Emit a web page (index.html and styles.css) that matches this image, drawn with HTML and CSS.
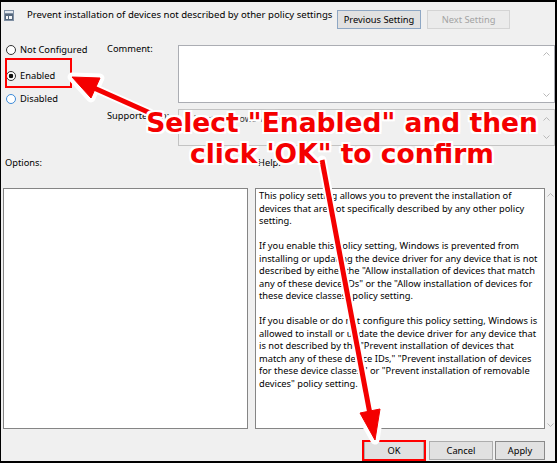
FILE: index.html
```html
<!DOCTYPE html>
<html>
<head>
<meta charset="utf-8">
<link rel="stylesheet" href="styles.css">
</head>
<body>
<div class="window">
  <div class="header">
    <svg class="title-icon" viewBox="0 0 10 11" width="10" height="11">
      <rect x="0" y="0" width="10" height="11" fill="#7f8fa3"/>
      <rect x="1" y="1" width="8" height="2" fill="#e4e9ef"/>
      <rect x="1" y="4" width="8" height="6" fill="#56677c"/>
      <rect x="2" y="6" width="2" height="3" fill="#f4f6f8"/>
      <rect x="5" y="6" width="3" height="3" fill="#f4f6f8"/>
    </svg>
    <div class="title">Prevent installation of devices not described by other policy settings</div>
    <div class="nav">
      <div class="btn btn-prev">Previous Setting</div>
      <div class="btn btn-next">Next Setting</div>
    </div>
  </div>

  <div class="config">
    <div class="radios">
      <div class="radio-row r1"><span class="radio"></span>Not Configured</div>
      <div class="radio-row r2"><span class="radio checked"></span>Enabled</div>
      <div class="radio-row r3"><span class="radio focus"></span>Disabled</div>
    </div>
    <div class="fields">
      <div class="label l-comment">Comment:</div>
      <div class="textbox comment">
        <div class="tb-body"></div>
        <div class="tb-scroll s-comment">
          <svg width="7" height="4" viewBox="0 0 7 4"><path d="M0.5 3.5 L3.5 0.5 L6.5 3.5" fill="none" stroke="#b9b9b9" stroke-width="1"/></svg>
          <svg width="7" height="4" viewBox="0 0 7 4"><path d="M0.5 0.5 L3.5 3.5 L6.5 0.5" fill="none" stroke="#b9b9b9" stroke-width="1"/></svg>
        </div>
      </div>
      <div class="label l-supported">Supported on:</div>
      <div class="textbox supported">
        <div class="tb-body supported-text">At least Windows Vista</div>
        <div class="tb-scroll s-supported">
          <svg width="7" height="4" viewBox="0 0 7 4"><path d="M0.5 3.5 L3.5 0.5 L6.5 3.5" fill="none" stroke="#b9b9b9" stroke-width="1"/></svg>
          <svg width="7" height="4" viewBox="0 0 7 4"><path d="M0.5 0.5 L3.5 3.5 L6.5 0.5" fill="none" stroke="#b9b9b9" stroke-width="1"/></svg>
        </div>
      </div>
    </div>
  </div>

  <div class="section-labels">
    <div class="lbl-options">Options:</div>
    <div class="lbl-help">Help:</div>
  </div>

  <div class="panels">
    <div class="options-box"></div>
    <div class="help-wrap">
      <div class="help-text">
        <p>This policy setting allows you to prevent the installation of<br>devices that are not specifically described by any other policy<br>setting.</p>
        <p>If you enable this policy setting, Windows is prevented from<br>installing or updating the device driver for any device that is not<br>described by either the "Allow installation of devices that match<br>any of these device IDs" or the "Allow installation of devices for<br>these device classes" policy setting.</p>
        <p>If you disable or do not configure this policy setting, Windows is<br>allowed to install or update the device driver for any device that<br>is not described by the "Prevent installation of devices that<br>match any of these device IDs," "Prevent installation of devices<br>for these device classes," or "Prevent installation of removable<br>devices" policy setting.</p>
      </div>
      <div class="help-scroll">
        <svg width="7" height="4" viewBox="0 0 7 4"><path d="M0.5 3.5 L3.5 0.5 L6.5 3.5" fill="none" stroke="#b9b9b9" stroke-width="1"/></svg>
        <svg width="7" height="4" viewBox="0 0 7 4"><path d="M0.5 0.5 L3.5 3.5 L6.5 0.5" fill="none" stroke="#b9b9b9" stroke-width="1"/></svg>
      </div>
    </div>
  </div>

  <div class="footer">
    <div class="btn btn-ok">OK</div>
    <div class="btn btn-cancel">Cancel</div>
    <div class="btn btn-apply">Apply</div>
  </div>

  <div class="mark mark-enabled"></div>
  <div class="mark mark-ok"></div>

  <svg class="arrows" viewBox="0 0 557 463" width="557" height="463">
    <g stroke="#fff" fill="#fff" stroke-width="9" stroke-linejoin="round" stroke-linecap="round">
      <line x1="150" y1="113" x2="94" y2="88"/>
      <polygon points="72,77 91,98 100,78"/>
      <line x1="322" y1="160" x2="370" y2="414"/>
      <polygon points="375,440 360,413 380,409"/>
    </g>
    <g stroke="#f40000" fill="#f40000" stroke-linejoin="round">
      <line x1="150" y1="113" x2="94" y2="88" stroke-width="5"/>
      <polygon points="72,77 91,98 100,78" stroke-width="1"/>
      <line x1="322" y1="160" x2="370" y2="414" stroke-width="5"/>
      <polygon points="375,440 360,413 380,409" stroke-width="1"/>
    </g>
  </svg>

  <div class="callout">Select "Enabled" and then<br>click 'OK" to confirm</div>
</div>
</body>
</html>
```

FILE: styles.css
```css
body {
  margin: 0;
}

.window {
  position: relative;
  width: 557px;
  height: 463px;
  box-sizing: border-box;
  border-style: solid;
  border-color: #000;
  border-width: 2px 2px 2px 1px;
  background: #f0f0f0;
  font-family: "Noto Sans", "Liberation Sans", sans-serif;
  font-size: 9.3px;
  color: #000;
  overflow: hidden;
}

/* header */
.header {
  display: flex;
  align-items: flex-start;
  height: 36px;
  box-sizing: border-box;
  padding: 7px 0 0 3px;
}

.title-icon {
  flex: none;
  margin-right: 13px;
  margin-top: 1px;
}

.title {
  line-height: 12px;
  font-size: 9.6px;
}

.nav {
  display: flex;
  gap: 6px;
  margin-left: auto;
  margin-right: 45px;
  margin-top: 1px;
}

.btn {
  height: 19px;
  box-sizing: border-box;
  border: 1px solid #adadad;
  background: #e1e1e1;
  display: flex;
  align-items: center;
  justify-content: center;
  line-height: 12px;
}

.btn-prev {
  width: 84px;
  border-color: #8ea7c4;
}

.btn-next {
  width: 83px;
  background: #ebebeb;
  border-color: #d4d4d4;
  color: #a3a3a3;
}

/* config area */
.config {
  display: flex;
  padding-top: 7px;
}

.radios {
  width: 99px;
  flex: none;
}

.radio-row {
  display: flex;
  align-items: center;
  height: 12px;
  line-height: 12px;
  padding-left: 5px;
}

.r1 { margin-top: -1px; }
.r2 { margin-top: 14px; }
.r3 { margin-top: 11px; }

.radio {
  flex: none;
  width: 10px;
  height: 10px;
  box-sizing: border-box;
  border: 1px solid #333;
  border-radius: 50%;
  background: #fff;
  margin-right: 4px;
}

.radio.checked {
  background: radial-gradient(circle, #111 0 2px, #fff 2.6px);
}

.radio.focus {
  border-color: #3c8ad8;
}

.fields {
  flex: 1;
  display: grid;
  grid-template-columns: 78px 1fr;
  grid-template-rows: 58px 37px;
  row-gap: 6px;
}

.label {
  padding-left: 7px;
  line-height: 12px;
  white-space: nowrap;
}

.l-comment { margin-top: -2px; }
.l-supported { margin-top: 1px; }

.textbox {
  display: flex;
  box-sizing: border-box;
  border: 1px solid #abadb3;
  background: #fff;
}

.textbox.supported {
  background: #f0f0f0;
  border-color: #c3c3c3;
}

.tb-body {
  flex: 1;
}

.supported-text {
  padding: 3px 0 0 3px;
  line-height: 12px;
  color: #333;
}

.tb-scroll {
  width: 16px;
  flex: none;
  display: flex;
  flex-direction: column;
  justify-content: space-between;
  align-items: center;
  box-sizing: border-box;
}

.s-comment { padding: 6px 0 5px; }
.s-supported { padding: 7px 0 6px; }

/* section labels */
.section-labels {
  display: flex;
  height: 42px;
  box-sizing: border-box;
  padding-top: 11px;
  line-height: 12px;
}

.lbl-options {
  width: 253px;
  padding-left: 4px;
}

/* panels */
.panels {
  display: flex;
  height: 241px;
  padding-left: 2px;
  gap: 7px;
}

.options-box {
  width: 245px;
  box-sizing: border-box;
  background: #fff;
  border: 1px solid #858585;
}

.help-wrap {
  width: 300px;
  display: flex;
}

.help-text {
  flex: 1;
  box-sizing: border-box;
  background: #fff;
  border: 1px solid #858585;
  padding: 1px 3px;
  line-height: 12.5px;
  white-space: nowrap;
  overflow: hidden;
}

.help-text p {
  margin: 0 0 12.5px;
}

.help-scroll {
  width: 10px;
  flex: none;
  display: flex;
  flex-direction: column;
  justify-content: space-between;
  align-items: center;
  box-sizing: border-box;
  padding: 5px 0 2px;
}

/* footer */
.footer {
  display: flex;
  justify-content: flex-end;
  padding: 12px 10px 0 0;
}

.btn-ok {
  width: 60px;
  margin-right: 5px;
}

.btn-cancel {
  width: 64px;
  margin-right: 2px;
}

.btn-apply {
  width: 50px;
  border-color: #8a8a8a;
}

/* annotations */
.mark {
  position: absolute;
  box-sizing: border-box;
  border: 2px solid #f00;
}

.mark-enabled {
  left: 4px;
  top: 56px;
  width: 67px;
  height: 30px;
}

.mark-ok {
  left: 361px;
  top: 438px;
  width: 64px;
  height: 21px;
}

.arrows {
  position: absolute;
  left: -1px;
  top: -2px;
}

.callout {
  position: absolute;
  left: 141px;
  top: 105px;
  width: 400px;
  text-align: center;
  font-family: "DejaVu Sans", sans-serif;
  font-weight: bold;
  font-size: 26.5px;
  line-height: 31px;
  color: #f40000;
  white-space: nowrap;
  text-shadow:
    2px 0 0 #fff, -2px 0 0 #fff, 0 2px 0 #fff, 0 -2px 0 #fff,
    2px 2px 0 #fff, -2px -2px 0 #fff, 2px -2px 0 #fff, -2px 2px 0 #fff,
    0 0 3px #fff, 0 0 3px #fff;
}
```
